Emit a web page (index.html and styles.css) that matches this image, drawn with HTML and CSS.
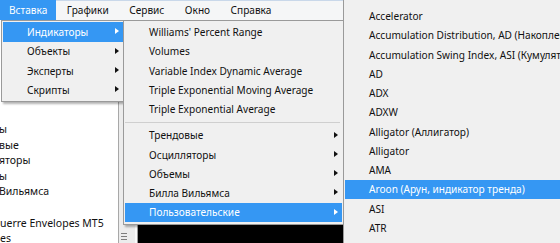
FILE: index.html
```html
<!DOCTYPE html>
<html lang="ru">
<head>
  <meta charset="UTF-8" />
  <title>Вставка — Индикаторы</title>
  <link rel="stylesheet" href="styles.css">
</head>
<body>
  <div class="window">

    <!-- Главное меню -->
    <div class="menubar">
      <span class="menubar-item is-open">Вставка</span>
      <span class="menubar-item">Графики</span>
      <span class="menubar-item">Сервис</span>
      <span class="menubar-item">Окно</span>
      <span class="menubar-item">Справка</span>
    </div>

    <div class="workspace">
      <div class="navigator">
        <ul class="tree">
          <li class="cut">ы</li>
          <li class="cut">вые</li>
          <li class="cut">яторы</li>
          <li class="cut">ы</li>
          <li class="cut">Вильямса</li>
          <li></li>
          <li>uerre Envelopes MT5</li>
          <li>es</li>
        </ul>
      </div>
      <div class="nav-scroll">
        <div class="grip"></div>
      </div>
      <div class="divider"></div>
      <div class="chart"></div>
    </div>

    <!-- Вставка -->
    <div class="menu menu-insert">
      <div class="menu-row is-active has-sub">Индикаторы</div>
      <div class="menu-row has-sub">Объекты</div>
      <div class="menu-row has-sub">Эксперты</div>
      <div class="menu-row has-sub">Скрипты</div>
    </div>

    <!-- Вставка > Индикаторы -->
    <div class="menu menu-indicators">
      <div class="menu-row">Williams' Percent Range</div>
      <div class="menu-row">Volumes</div>
      <div class="menu-row">Variable Index Dynamic Average</div>
      <div class="menu-row">Triple Exponential Moving Average</div>
      <div class="menu-row">Triple Exponential Average</div>
      <div class="menu-sep"></div>
      <div class="menu-row has-sub">Трендовые</div>
      <div class="menu-row has-sub">Осцилляторы</div>
      <div class="menu-row has-sub">Объемы</div>
      <div class="menu-row has-sub">Билла Вильямса</div>
      <div class="menu-row is-active has-sub">Пользовательские</div>
    </div>

    <!-- Вставка > Индикаторы > Пользовательские -->
    <div class="menu menu-custom">
      <div class="menu-row">Accelerator</div>
      <div class="menu-row">Accumulation Distribution, AD (Накопление/Распределение)</div>
      <div class="menu-row">Accumulation Swing Index, ASI (Кумулятивный индекс колебаний)</div>
      <div class="menu-row">AD</div>
      <div class="menu-row">ADX</div>
      <div class="menu-row">ADXW</div>
      <div class="menu-row">Alligator (Аллигатор)</div>
      <div class="menu-row">Alligator</div>
      <div class="menu-row">AMA</div>
      <div class="menu-row is-active">Aroon (Арун, индикатор тренда)</div>
      <div class="menu-row">ASI</div>
      <div class="menu-row">ATR</div>
      <div class="menu-row">Average Directional Index, ADX (Индекс направленного движения)</div>
    </div>

  </div>
</body>
</html>
```

FILE: styles.css
```css
* { box-sizing: border-box; }

body {
  margin: 0;
  font-family: 'Noto Sans', 'DejaVu Sans', sans-serif;
  font-size: 10.1px;
  color: #111;
  background: #f0f0f0;
}

.window {
  position: relative;
  width: 560px;
  height: 243px;
  overflow: hidden;
  display: flex;
  flex-direction: column;
}

/* главное меню */
.menubar {
  height: 20px;
  flex: none;
  display: flex;
  background: #f5f6f7;
  border-top: 1px solid #c9d8ea;
}

.menubar-item {
  display: flex;
  align-items: center;
  padding: 0 10px 1px 10.5px;
}

.menubar-item.is-open {
  background: #3597f3;
  color: #fff;
  padding: 0 9px 1px;
  margin-top: -1px;
}

/* рабочая область */
.workspace {
  flex: 1;
  display: flex;
  min-height: 0;
}

.navigator {
  width: 118px;
  background: #fff;
  overflow: hidden;
}

.tree {
  list-style: none;
  margin: 0;
  padding: 102px 0 0;
  white-space: nowrap;
  font-size: 10.5px;
}

.tree li {
  height: 15.6px;
  line-height: 15.6px;
}

.tree li.cut {
  margin-left: -1px;
}

.nav-scroll {
  width: 17px;
  background: #ececec;
  border-left: 1px solid #a8a8a8;
  display: flex;
  flex-direction: column;
  justify-content: flex-end;
  padding: 0 0 3px 2px;
}

.grip {
  width: 6px;
  height: 7px;
  background: repeating-linear-gradient(to bottom, #7d7d7d 0 1px, transparent 1px 3px);
}

.divider {
  width: 3px;
  background: #fafafa;
  border-right: 1px solid #9a9a9a;
}

.chart {
  flex: 1;
  background: #000;
}

/* выпадающие меню */
.menu {
  position: absolute;
  background: #f0f0f0;
  border: 1px solid #9a9a9a;
  box-shadow: 2px 2px 2px rgba(0, 0, 0, 0.3);
  padding: 1.4px 1px 2px;
  white-space: nowrap;
}

.menu-row {
  position: relative;
  height: 19.25px;
  display: flex;
  align-items: center;
  padding-left: 24px;
}

.menu-row.is-active {
  background: #3597f3;
  color: #fff;
}

.menu-row.has-sub::after {
  content: '';
  position: absolute;
  right: 4px;
  top: 6px;
  border-left: 4px solid #111;
  border-top: 3.5px solid transparent;
  border-bottom: 3.5px solid transparent;
}

.menu-row.is-active.has-sub::after {
  border-left-color: #fff;
}

.menu-sep {
  height: 7px;
  margin: 0 2px 0 0;
  display: flex;
  align-items: center;
}

.menu-sep::before {
  content: '';
  flex: 1;
  border-top: 1px solid #cfcfcf;
}

.menu-insert {
  left: 1px;
  top: 20px;
  width: 124px;
}

.menu-indicators {
  left: 123px;
  top: 20px;
  width: 221px;
}

.menu-custom {
  left: 343px;
  top: -6px;
  width: 280px;
  padding-top: 11.4px;
}
```
